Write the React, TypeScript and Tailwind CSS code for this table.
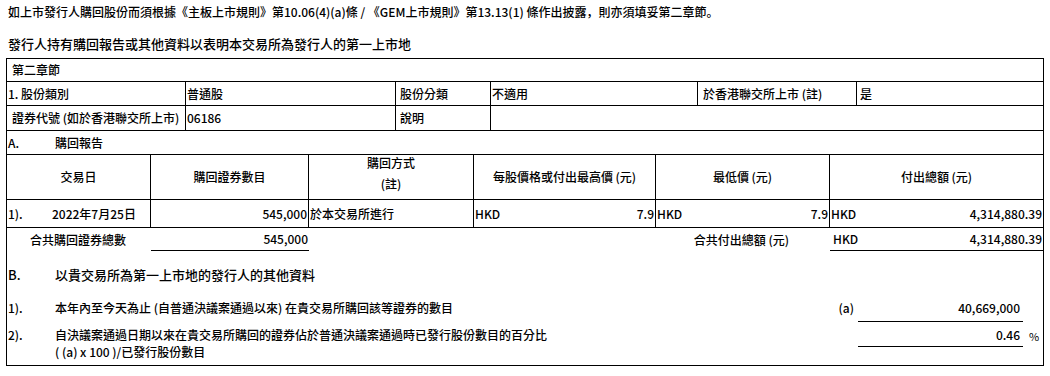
import React from 'react';

const font = { fontFamily: '"Noto Sans CJK TC", "Noto Sans CJK SC", sans-serif' };
const sc = { fontFamily: '"Noto Sans CJK SC", sans-serif' };

const line = 'border-black';

const App: React.FC = () => {
  return (
    <div className="w-[1050px] h-[376px] overflow-hidden bg-white text-black font-medium" style={font}>
      <p className="pl-[8px] pt-[4px] text-[12px] leading-[16px]">
        如上市發行人購回股份而須根據《主板上市規則》第10.06(4)(a)條 / 《GEM上市規則》第13.13(1) 條作出披露
        <span style={sc}>，</span>則亦須填妥第二章節<span style={sc}>。</span>
      </p>
      <p className="pl-[8px] mt-[16px] text-[13px] leading-[16px]">
        發行人持有購回報告或其他資料以表明本交易所為發行人的第一上市地
      </p>

      <div className={`ml-[6px] mt-[6px] w-[1038px] border ${line} text-[12px] leading-[16px]`}>
        {/* 第二章節 */}
        <div className={`h-[23px] border-b ${line} pl-[5px] flex items-center`}>第二章節</div>

        <div className={`h-[24px] border-b ${line} flex`}>
          <div className={`w-[179px] border-r ${line} pl-[1px] flex items-center`}>1. 股份類別</div>
          <div className={`w-[210px] border-r ${line} pl-[1px] flex items-center`}>普通股</div>
          <div className={`w-[95px] border-r ${line} pl-[4px] flex items-center`}>股份分類</div>
          <div className={`w-[207px] border-r ${line} pl-[1px] flex items-center`}>不適用</div>
          <div className={`w-[159px] border-r ${line} pl-[5px] flex items-center`}>於香港聯交所上市 (註)</div>
          <div className="flex-1 pl-[3px] flex items-center">是</div>
        </div>

        <div className={`h-[25px] border-b ${line} flex`}>
          <div className={`w-[179px] border-r ${line} pl-[5px] flex items-center`}>證券代號 (如於香港聯交所上市)</div>
          <div className={`w-[210px] border-r ${line} pl-[1px] flex items-center`}>06186</div>
          <div className={`w-[95px] border-r ${line} pl-[4px] flex items-center`}>說明</div>
          <div className="flex-1" />
        </div>

        <div className={`h-[24px] border-b ${line} flex items-center`}>
          <span className="w-[48px] pl-[1px]">A.</span>
          <span>購回報告</span>
        </div>

        {/* header */}
        <div className={`h-[45px] border-b ${line} flex text-center`}>
          <div className={`w-[144px] border-r ${line} flex items-center justify-center`}>交易日</div>
          <div className={`w-[158px] border-r ${line} flex items-center justify-center`}>購回證券數目</div>
          <div className={`w-[165px] border-r ${line} flex flex-col items-center`}>
            <span>購回方式</span>
            <span className="mt-[5px]">(註)</span>
          </div>
          <div className={`w-[182px] border-r ${line} flex items-center justify-center`}>每股價格或付出最高價 (元)</div>
          <div className={`w-[174px] border-r ${line} flex items-center justify-center`}>最低價 (元)</div>
          <div className="flex-1 flex items-center justify-center">付出總額 (元)</div>
        </div>

        {/* data row */}
        <div className={`h-[28px] border-b ${line} flex`}>
          <div className={`w-[144px] border-r ${line} pl-[1px] flex items-center`}>
            <span className="w-[44px]">1).</span>
            <span>2022年7月25日</span>
          </div>
          <div className={`w-[158px] border-r ${line} pr-[1px] flex items-center justify-end`}>545,000</div>
          <div className={`w-[165px] border-r ${line} pl-[1px] flex items-center`}>於本交易所進行</div>
          <div className={`w-[182px] border-r ${line} px-[1px] flex items-center justify-between`}>
            <span>HKD</span>
            <span>7.9</span>
          </div>
          <div className={`w-[174px] border-r ${line} px-[1px] flex items-center justify-between`}>
            <span>HKD</span>
            <span>7.9</span>
          </div>
          <div className="flex-1 px-[1px] flex items-center justify-between">
            <span>HKD</span>
            <span>4,314,880.39</span>
          </div>
        </div>

        {/* total row */}
        <div className="h-[23px] flex">
          <div className="w-[144px] pl-[23px] flex items-center">合共購回證券總數</div>
          <div className={`w-[158px] border-b ${line} pr-[1px] flex items-center justify-end`}>545,000</div>
          <div className="w-[521px] pr-[41px] flex items-center justify-end">合共付出總額 (元)</div>
          <div className={`flex-1 border-b ${line} pl-[3px] pr-[1px] flex items-center justify-between`}>
            <span>HKD</span>
            <span>4,314,880.39</span>
          </div>
        </div>

        {/* section B */}
        <div className="mt-[16px] flex text-[13px] leading-[16px]">
          <span className="w-[48px] pl-[1px]">B.</span>
          <span>以貴交易所為第一上市地的發行人的其他資料</span>
        </div>

        <div className="mt-[17px] flex items-start">
          <span className="w-[48px] pl-[1px]">1).</span>
          <span className="flex-1">本年內至今天為止 (自普通決議案通過以來) 在貴交易所購回該等證券的數目</span>
          <span className="mr-[4px]">(a)</span>
          <div className={`w-[165px] h-[22px] border-b ${line} pr-[3px] text-right`}>40,669,000</div>
          <div className="w-[20px]" />
        </div>

        <div className="flex items-start pb-[5px]">
          <div className="w-[48px] pl-[1px] pt-[5px]">2).</div>
          <div className="flex-1 pt-[5px]">
            <div>自決議案通過日期以來在貴交易所購回的證券佔於普通決議案通過時已發行股份數目的百分比</div>
            <div className="mt-[1px]">( (a) x 100 )/已發行股份數目</div>
          </div>
          <div className={`w-[165px] h-[25px] border-b ${line} pr-[3px] pt-[5px] text-right`}>0.46</div>
          <div className="w-[20px] pl-[6px] pt-[6px] text-[11px] leading-[16px] font-normal">%</div>
        </div>
      </div>
    </div>
  );
};

export default App;
